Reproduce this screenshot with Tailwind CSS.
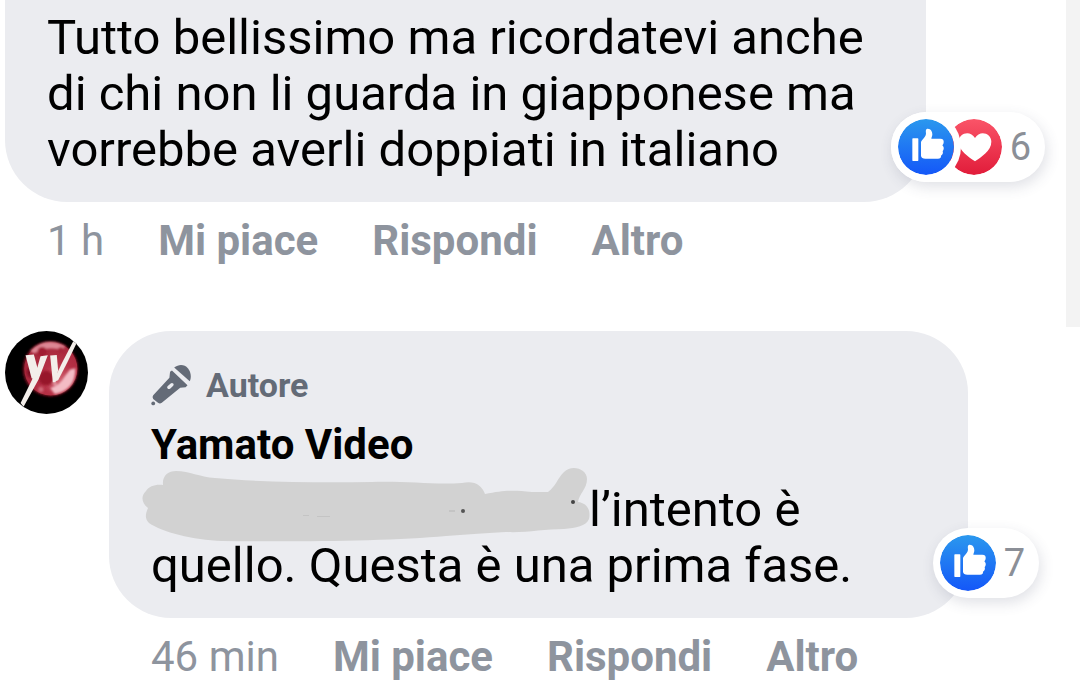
<!DOCTYPE html>
<html lang="it">
<head>
    <meta charset="UTF-8">
    <meta name="viewport" content="width=device-width, initial-scale=1.0">
    <title>Commenti</title>
    <script src="https://cdn.jsdelivr.net/npm/@tailwindcss/browser@4"></script>
</head>
<body class="bg-white font-[Roboto,sans-serif] text-black">
    <!-- Shared gradients -->
    <svg class="absolute size-0" aria-hidden="true">
        <defs>
            <linearGradient id="likeBg" x1="0" y1="0" x2="0" y2="1">
                <stop offset="0" stop-color="#2b98ee" />
                <stop offset="1" stop-color="#1457f8" />
            </linearGradient>
            <linearGradient id="loveBg" x1="0" y1="0" x2="0" y2="1">
                <stop offset="0" stop-color="#fa5468" />
                <stop offset="1" stop-color="#e11c3a" />
            </linearGradient>
        </defs>
    </svg>

    <main>
        <!-- First comment -->
        <section class="flex items-stretch pl-[5px]">
            <article class="min-w-0 flex-1 pb-[62px]">
                <div class="relative mr-[140px] rounded-b-[62px] bg-[#ebecf0] pt-[10px] pr-10 pb-6 pl-[42px]">
                    <p class="text-[49px] leading-[56px]">Tutto bellissimo ma ricordatevi anche di chi non li guarda in giapponese ma vorrebbe averli doppiati in italiano</p>
                    <button type="button" aria-label="6 reazioni" class="absolute right-[-119px] bottom-5 flex h-[70px] items-center rounded-full bg-white pr-[14px] pl-[7px] text-[38px] text-[#8b8f97] shadow-[2px_5px_14px_rgba(60,70,100,0.16)]">
                        <svg class="z-10 size-14 rounded-full ring-[7px] ring-white" viewBox="0 0 168 168">
                            <circle cx="84" cy="84" r="84" fill="url(#likeBg)" />
                            <rect x="43" y="58" width="18" height="68" rx="2" fill="#fff" />
                            <path fill="#fff" d="M69 69C74 60 84 54 84 43C83 36 83 30 88 29C98 28 103 37 103 46C103 51 101 55 100 59H127C135 59 138 64 137 70C137 74 135 77 133 79C139 84 138 93 134 96C136 102 134 107 129 110C130 116 126 119 120 119H82C75 119 69 116 69 110Z" />
                        </svg>
                        <svg class="-ml-2 size-14 rounded-full" viewBox="0 0 168 168">
                            <circle cx="84" cy="84" r="84" fill="url(#loveBg)" />
                            <path fill="#fff" d="M87 127C70 114 38 97 38 68C38 42 73 32 87 57C101 32 136 42 136 68C136 97 104 114 87 127Z" />
                        </svg>
                        <span class="ml-2">6</span>
                    </button>
                </div>
                <div class="mt-[15px] flex gap-[54px] pl-[42px] text-[42px] leading-[48px] text-[#8e949e]">
                    <time>1 h</time>
                    <button type="button" class="font-bold">Mi piace</button>
                    <button type="button" class="font-bold">Rispondi</button>
                    <button type="button" class="font-bold">Altro</button>
                </div>
            </article>
            <div class="w-[14px] shrink-0 bg-[#f3f3f3]"></div>
        </section>

        <!-- Reply from the page -->
        <section class="mt-1 flex items-start gap-[21px] pr-28 pl-[5px]">
            <a href="#" aria-label="Yamato Video" class="shrink-0">
                <svg class="size-[83px] rounded-full" viewBox="0 0 250 250">
                    <defs>
                        <radialGradient id="moon" cx="0.65" cy="0.7" r="0.8">
                            <stop offset="0" stop-color="#d0606f" />
                            <stop offset="0.4" stop-color="#b53045" />
                            <stop offset="1" stop-color="#a02438" />
                        </radialGradient>
                        <filter id="soft" x="-30%" y="-30%" width="160%" height="160%"><feGaussianBlur stdDeviation="4" /></filter>
                    </defs>
                    <rect width="250" height="250" fill="#000" />
                    <circle cx="137" cy="114" r="84" fill="#6b0f1e" filter="url(#soft)" />
                    <circle cx="138" cy="114" r="80" fill="url(#moon)" />
                    <g filter="url(#soft)">
                        <path fill="#dc8794" d="M76 60Q122 14 182 46L172 58Q130 44 88 68Z" />
                        <path fill="#f3bcc5" d="M212 112Q214 176 150 190L136 172Q166 162 180 136L196 116Z" />
                        <circle cx="124" cy="142" r="22" fill="#97142b" />
                        <circle cx="84" cy="124" r="18" fill="#7d1022" />
                        <circle cx="112" cy="62" r="14" fill="#a01a30" />
                        <circle cx="108" cy="176" r="8" fill="#cf6877" />
                        <circle cx="168" cy="58" r="9" fill="#a8253a" />
                        <circle cx="150" cy="158" r="6" fill="#e49aa5" />
                    </g>
                    <g fill="#f3eeea">
                        <path d="M62 73L87 71L98 112L92 146L80 142Z" />
                        <path d="M107 76L129 73L101 146L56 228L47 217L80 150L98 108Z" />
                        <path d="M136 74L156 72L160 118L152 154L144 154Z" />
                        <path d="M144 154L172 96L206 30L215 38L188 94L160 148Z" />
                    </g>
                </svg>
            </a>
            <article class="min-w-0 flex-1">
                <div class="relative rounded-[62px] bg-[#ebecf0] pt-[34px] pr-6 pb-6 pl-[42px]">
                    <div class="flex items-center gap-[15px] text-[34px] leading-10 font-bold text-[#646b77]">
                        <svg class="size-10 overflow-visible" viewBox="0 0 126 126" fill="currentColor">
                            <path d="M73 8C88-4 106-2 116 10C126 22 128 38 122 51Z" />
                            <path fill-rule="evenodd" d="M60 21L66 17L115 64L109 70L92 72L34 119Q28 124 22 119L7 107Q2 102 7 95L58 40ZM62 58L52 67Q49 71 53 75Q57 77 61 74L70 65Q73 61 70 58Q66 55 62 58Z" />
                            <circle cx="7" cy="121" r="6" />
                        </svg>
                        <span>Autore</span>
                    </div>
                    <h2 class="mt-4 text-[42px] leading-[48px] font-bold"><a href="#">Yamato Video</a></h2>
                    <p class="mt-[13px] text-[49px] leading-[56px]">
                        <!-- Name painted over -->
                        <span class="relative inline-block h-10 w-[438px]">
                            <svg class="absolute bottom-[-19px] left-[-9px] h-[78px] w-[452px] max-w-none" viewBox="0 0 452 78">
                                <path fill="#d2d2d2" d="M4 24C7 19 14 17 21 18C20 9 26 4 34 4C48 4 57 10 73 11C115 15 175 16 230 15C265 14 293 18 320 16C332 13 340 18 343 27C363 23 371 23 390 25H406C414 19 415 12 422 5C430-3 445 2 445 12C445 22 437 27 436 35C445 36 449 43 447 52C444 59 434 61 422 62C402 62 384 66 364 65C340 66 323 68 304 69C250 74 155 75 80 74C51 73 20 65 7 56C2 51 4 46 6 41C-1 35-1 29 4 24Z" />
                                <path fill="#c4c4c4" d="M307 43H313V45H307ZM161 48H167V49H161ZM175 49H188V50H175Z" />
                                <circle cx="321" cy="44" r="2" fill="#555" />
                                <circle cx="431" cy="35" r="2" fill="#444" />
                            </svg>
                        </span><span>l’intento è</span>
                        <br>quello. Questa è una prima fase.
                    </p>
                    <button type="button" aria-label="7 Mi piace" class="absolute right-[-71px] bottom-5 flex h-[70px] items-center rounded-full bg-white pr-[14px] pl-[7px] text-[38px] text-[#8b8f97] shadow-[2px_5px_14px_rgba(60,70,100,0.16)]">
                        <svg class="size-14 rounded-full" viewBox="0 0 168 168">
                            <circle cx="84" cy="84" r="84" fill="url(#likeBg)" />
                            <rect x="43" y="58" width="18" height="68" rx="2" fill="#fff" />
                            <path fill="#fff" d="M69 69C74 60 84 54 84 43C83 36 83 30 88 29C98 28 103 37 103 46C103 51 101 55 100 59H127C135 59 138 64 137 70C137 74 135 77 133 79C139 84 138 93 134 96C136 102 134 107 129 110C130 116 126 119 120 119H82C75 119 69 116 69 110Z" />
                        </svg>
                        <span class="ml-2">7</span>
                    </button>
                </div>
                <div class="mt-[15px] flex gap-[54px] pl-[42px] text-[42px] leading-[48px] text-[#8e949e]">
                    <time>46 min</time>
                    <button type="button" class="font-bold">Mi piace</button>
                    <button type="button" class="font-bold">Rispondi</button>
                    <button type="button" class="font-bold">Altro</button>
                </div>
            </article>
        </section>
    </main>
</body>
</html>
